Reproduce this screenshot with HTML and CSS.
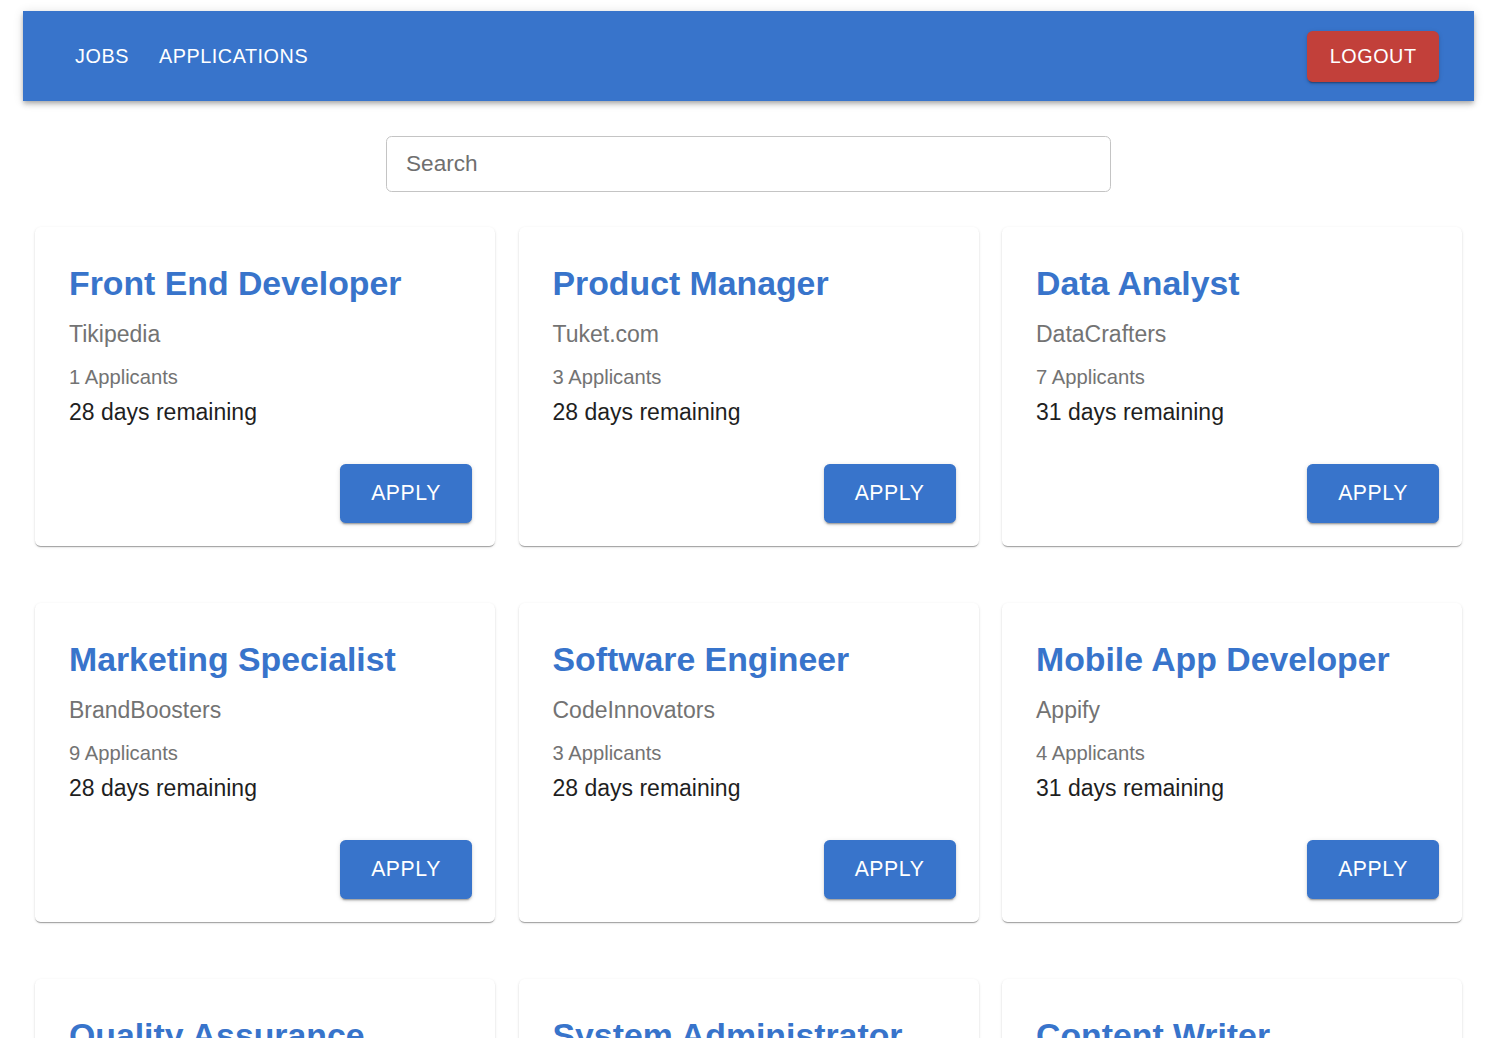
FILE: index.html
```html
<!DOCTYPE html>
<html lang="en">
<head>
<meta charset="utf-8">
<title>Jobs</title>
<link rel="stylesheet" href="styles.css">
</head>
<body>
<div class="page">
  <header class="appbar">
    <nav class="nav-links">
      <a class="nav-btn" href="#">Jobs</a>
      <a class="nav-btn" href="#">Applications</a>
    </nav>
    <button class="logout">Logout</button>
  </header>

  <div class="search-wrap">
    <input class="search" type="text" placeholder="Search">
  </div>

  <main class="grid">
    <article class="card">
      <div class="card-content">
        <h2 class="title">Front End Developer</h2>
        <p class="company">Tikipedia</p>
        <p class="applicants">1 Applicants</p>
        <p class="remaining">28 days remaining</p>
      </div>
      <div class="card-actions"><button class="apply">Apply</button></div>
    </article>
    <article class="card">
      <div class="card-content">
        <h2 class="title">Product Manager</h2>
        <p class="company">Tuket.com</p>
        <p class="applicants">3 Applicants</p>
        <p class="remaining">28 days remaining</p>
      </div>
      <div class="card-actions"><button class="apply">Apply</button></div>
    </article>
    <article class="card">
      <div class="card-content">
        <h2 class="title">Data Analyst</h2>
        <p class="company">DataCrafters</p>
        <p class="applicants">7 Applicants</p>
        <p class="remaining">31 days remaining</p>
      </div>
      <div class="card-actions"><button class="apply">Apply</button></div>
    </article>
    <article class="card">
      <div class="card-content">
        <h2 class="title">Marketing Specialist</h2>
        <p class="company">BrandBoosters</p>
        <p class="applicants">9 Applicants</p>
        <p class="remaining">28 days remaining</p>
      </div>
      <div class="card-actions"><button class="apply">Apply</button></div>
    </article>
    <article class="card">
      <div class="card-content">
        <h2 class="title">Software Engineer</h2>
        <p class="company">CodeInnovators</p>
        <p class="applicants">3 Applicants</p>
        <p class="remaining">28 days remaining</p>
      </div>
      <div class="card-actions"><button class="apply">Apply</button></div>
    </article>
    <article class="card">
      <div class="card-content">
        <h2 class="title">Mobile App Developer</h2>
        <p class="company">Appify</p>
        <p class="applicants">4 Applicants</p>
        <p class="remaining">31 days remaining</p>
      </div>
      <div class="card-actions"><button class="apply">Apply</button></div>
    </article>
    <article class="card">
      <div class="card-content">
        <h2 class="title">Quality Assurance</h2>
        <p class="company">TestWorks</p>
        <p class="applicants">2 Applicants</p>
        <p class="remaining">28 days remaining</p>
      </div>
      <div class="card-actions"><button class="apply">Apply</button></div>
    </article>
    <article class="card">
      <div class="card-content">
        <h2 class="title">System Administrator</h2>
        <p class="company">NetOps</p>
        <p class="applicants">5 Applicants</p>
        <p class="remaining">31 days remaining</p>
      </div>
      <div class="card-actions"><button class="apply">Apply</button></div>
    </article>
    <article class="card">
      <div class="card-content">
        <h2 class="title">Content Writer</h2>
        <p class="company">WordSmiths</p>
        <p class="applicants">6 Applicants</p>
        <p class="remaining">28 days remaining</p>
      </div>
      <div class="card-actions"><button class="apply">Apply</button></div>
    </article>
  </main>
</div>
</body>
</html>
```

FILE: styles.css
```css
* { box-sizing: border-box; }

html, body {
  margin: 0;
  padding: 0;
  background: #ffffff;
  font-family: "Liberation Sans", Arial, Helvetica, sans-serif;
}

.page {
  width: 1497px;
  padding-top: 11px;
  padding-bottom: 60px;
}

.appbar {
  margin: 0 23px;
  height: 90px;
  background: #3874cb;
  display: flex;
  align-items: center;
  justify-content: space-between;
  padding: 0 35px 0 41px;
  box-shadow: 0 2px 4px -1px rgba(0,0,0,0.2), 0 4px 5px 0 rgba(0,0,0,0.14), 0 1px 10px 0 rgba(0,0,0,0.12);
}

.nav-links {
  display: flex;
  gap: 8px;
}

.nav-btn {
  color: #ffffff;
  text-decoration: none;
  text-transform: uppercase;
  font-size: 19.8px;
  font-weight: 500;
  letter-spacing: 0.56px;
  padding: 11px 11px;
  line-height: 1.75;
}

.logout {
  background: #c2403a;
  color: #ffffff;
  border: none;
  border-radius: 5.6px;
  height: 51px;
  padding: 0 22.4px;
  font-family: inherit;
  font-size: 19.8px;
  letter-spacing: 0.56px;
  text-transform: uppercase;
  box-shadow: 0 3px 1px -2px rgba(0,0,0,0.2), 0 2px 2px 0 rgba(0,0,0,0.14), 0 1px 5px 0 rgba(0,0,0,0.12);
}

.search-wrap {
  display: flex;
  justify-content: center;
  margin-top: 35px;
}

.search {
  width: 725px;
  height: 56px;
  border: 1px solid #c4c4c4;
  border-radius: 5.6px;
  padding: 0 19px;
  font-family: inherit;
  font-size: 22.6px;
  color: #222;
  outline: none;
}

.search::placeholder {
  color: #6f6f6f;
}

.grid {
  display: grid;
  grid-template-columns: repeat(3, 460px);
  column-gap: 23.5px;
  row-gap: 57px;
  padding: 0 35px;
  margin-top: 35px;
}

.card {
  background: #ffffff;
  border-radius: 5.6px;
  box-shadow: 0 2px 1px -1px rgba(0,0,0,0.2), 0 1px 1px 0 rgba(0,0,0,0.14), 0 1px 3px 0 rgba(0,0,0,0.12);
  display: flex;
  flex-direction: column;
}

.card-content {
  padding: 34px 34px 34px 34px;
}

.title {
  margin: 0 0 12px 0;
  font-size: 33.8px;
  font-weight: 700;
  line-height: 44.8px;
  color: #3874cb;
}

.company {
  margin: 0 0 12px 0;
  font-size: 23px;
  line-height: 33.6px;
  color: #737373;
}

.applicants {
  margin: 0 0 5px 0;
  font-size: 20.2px;
  line-height: 28px;
  color: #737373;
}

.remaining {
  margin: 0;
  font-size: 23px;
  line-height: 33.6px;
  color: #1f1f1f;
}

.card-actions {
  display: flex;
  justify-content: flex-end;
  padding: 0 23px 23px 23px;
}

.apply {
  background: #3874cb;
  color: #ffffff;
  border: none;
  border-radius: 5.6px;
  height: 59px;
  width: 132px;
  font-family: inherit;
  font-size: 21.2px;
  letter-spacing: 0.6px;
  text-transform: uppercase;
  box-shadow: 0 3px 1px -2px rgba(0,0,0,0.2), 0 2px 2px 0 rgba(0,0,0,0.14), 0 1px 5px 0 rgba(0,0,0,0.12);
}
```
